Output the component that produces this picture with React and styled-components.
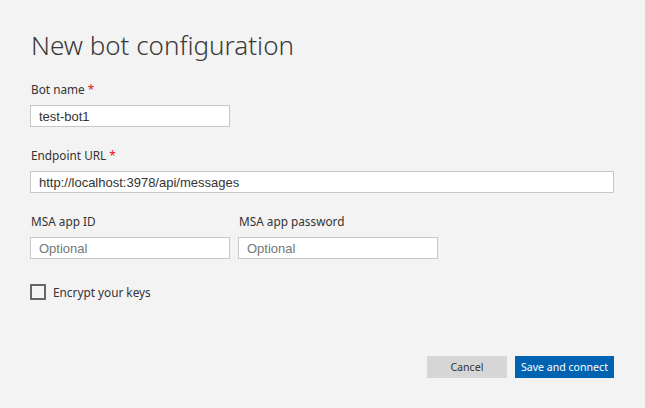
import React from "react";
import styled, { createGlobalStyle } from "styled-components";

const GlobalStyle = createGlobalStyle`
  html, body {
    margin: 0;
    padding: 0;
    background: #f3f3f3;
  }
  * { box-sizing: border-box; }
`;

const Page = styled.div`
  width: 645px;
  height: 408px;
  background: #f3f3f3;
  padding: 27px 31px 0 30px;
  font-family: "Noto Sans", "Open Sans", sans-serif;
  color: #333;
  display: flex;
  flex-direction: column;
`;

const Title = styled.h1`
  margin: 0 0 0 1px;
  font-size: 26px;
  font-weight: 300;
  line-height: 36px;
  color: #3a3a3a;
`;

const Form = styled.div`
  display: flex;
  flex-direction: column;
  margin-top: 18px;
`;

const Row = styled.div`
  display: flex;
  gap: 8px;
  margin-bottom: ${({ gapBelow }) => gapBelow || 0}px;
`;

const Field = styled.div`
  display: flex;
  flex-direction: column;
  width: ${({ wide }) => (wide ? "584px" : "200px")};
`;

const Label = styled.label`
  font-size: 11.8px;
  line-height: 17px;
  color: #333;
  margin: 0 0 7px 1px;
`;

const Required = styled.span`
  color: #e81123;
  margin-left: 3px;
`;

const Input = styled.input`
  height: 22px;
  width: 100%;
  border: 1px solid #c8c8c8;
  background: #fff;
  padding: 0 8px;
  font-family: "Liberation Sans", Arial, sans-serif;
  font-size: 13px;
  color: #333;
  outline: none;
  &::placeholder {
    color: #767676;
  }
`;

const CheckRow = styled.label`
  display: flex;
  align-items: center;
  gap: 7px;
  height: 16px;
  margin-top: 25px;
  font-size: 11.8px;
  color: #333;
`;

const Box = styled.span`
  width: 16px;
  height: 16px;
  flex: none;
  border: 2px solid #666;
  background: transparent;
`;

const Footer = styled.div`
  display: flex;
  justify-content: flex-end;
  gap: 8px;
  margin-top: 56px;
`;

const Button = styled.button`
  height: 22px;
  min-width: 80px;
  padding: 0 6px;
  border: none;
  font-family: "Noto Sans", "Open Sans", sans-serif;
  font-size: 10.6px;
  background: ${({ primary }) => (primary ? "#0063b1" : "#d6d6d6")};
  color: ${({ primary }) => (primary ? "#fff" : "#333")};
  cursor: pointer;
`;

export default function App() {
  return (
    <>
      <GlobalStyle />
      <Page>
        <Title>New bot configuration</Title>
        <Form>
          <Row gapBelow={20}>
            <Field>
              <Label>
                Bot name<Required>*</Required>
              </Label>
              <Input defaultValue="test-bot1" />
            </Field>
          </Row>
          <Row gapBelow={20}>
            <Field wide>
              <Label>
                Endpoint URL<Required>*</Required>
              </Label>
              <Input defaultValue="http://localhost:3978/api/messages" />
            </Field>
          </Row>
          <Row>
            <Field>
              <Label>MSA app ID</Label>
              <Input placeholder="Optional" />
            </Field>
            <Field>
              <Label>MSA app password</Label>
              <Input placeholder="Optional" type="password" />
            </Field>
          </Row>
          <CheckRow>
            <Box />
            Encrypt your keys
          </CheckRow>
        </Form>
        <Footer>
          <Button>Cancel</Button>
          <Button primary>Save and connect</Button>
        </Footer>
      </Page>
    </>
  );
}
